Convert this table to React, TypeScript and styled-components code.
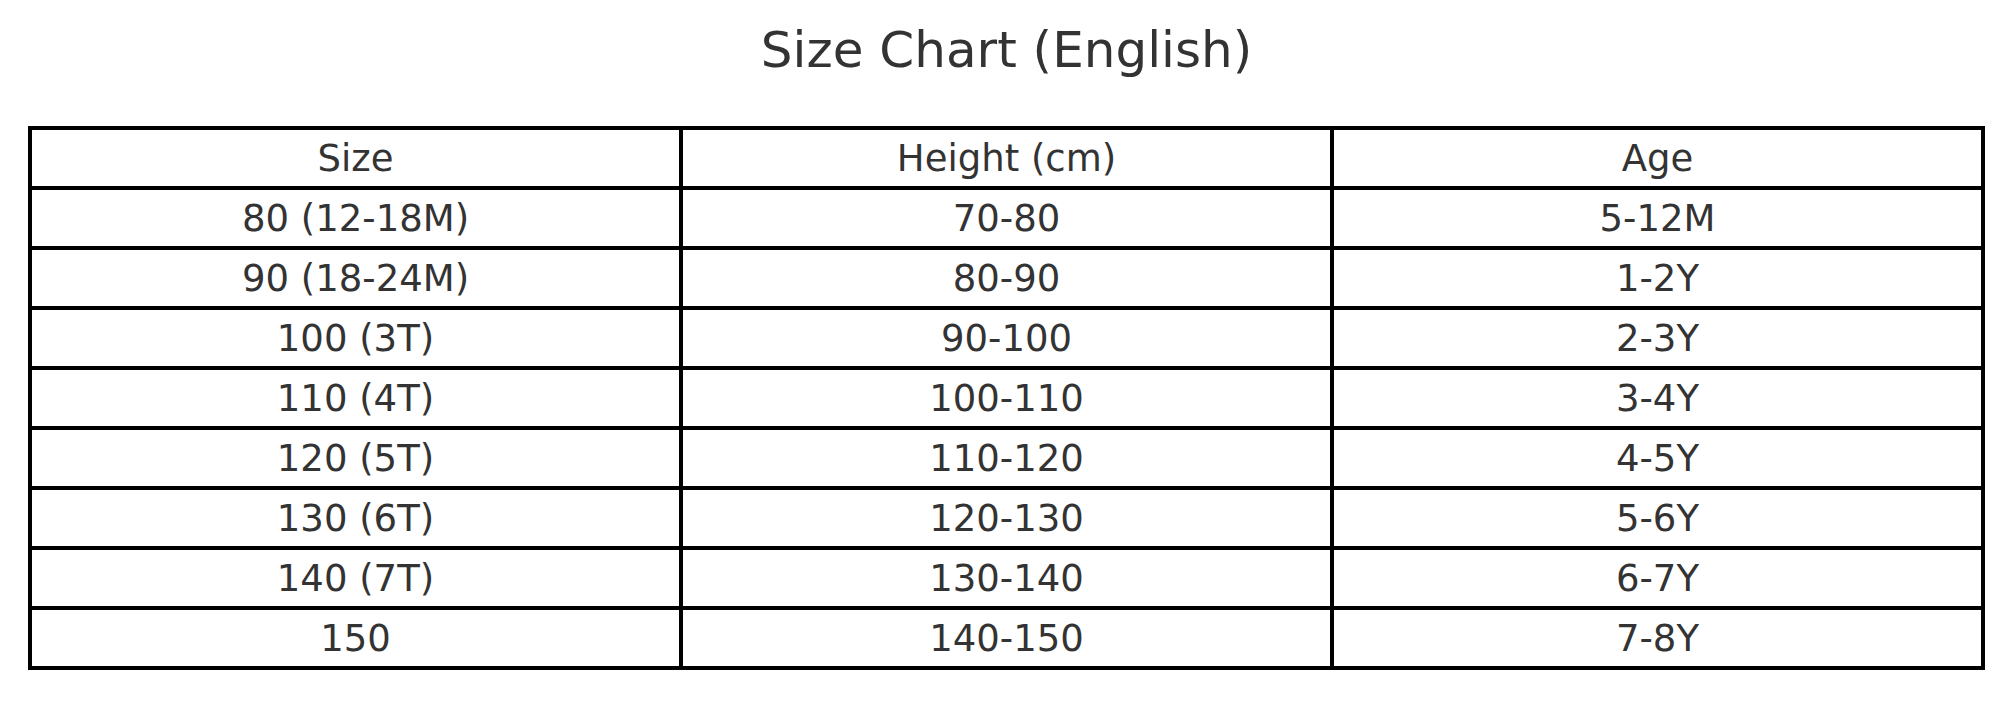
import React from "react";
import styled, { createGlobalStyle } from "styled-components";

const GlobalStyle = createGlobalStyle`
  html, body {
    margin: 0;
    padding: 0;
    background: #fff;
  }
  body {
    font-family: "DejaVu Sans", "Liberation Sans", sans-serif;
    color: #333;
  }
`;

type Row = { size: string; height: string; age: string };

const rows: Row[] = [
  { size: "80 (12-18M)", height: "70-80", age: "5-12M" },
  { size: "90 (18-24M)", height: "80-90", age: "1-2Y" },
  { size: "100 (3T)", height: "90-100", age: "2-3Y" },
  { size: "110 (4T)", height: "100-110", age: "3-4Y" },
  { size: "120 (5T)", height: "110-120", age: "4-5Y" },
  { size: "130 (6T)", height: "120-130", age: "5-6Y" },
  { size: "140 (7T)", height: "130-140", age: "6-7Y" },
  { size: "150", height: "140-150", age: "7-8Y" },
];

const Page = styled.div`
  width: 2013px;
  height: 717px;
  display: flex;
  flex-direction: column;
  align-items: flex-start;
  padding-left: 28px;
  box-sizing: border-box;
`;

const Title = styled.h1`
  width: 1957px;
  margin: 0;
  padding-top: 25px;
  font-size: 50px;
  line-height: 50px;
  font-weight: normal;
  text-align: center;
  color: #333;
`;

const Table = styled.table`
  margin-top: 51px;
  width: 1957px;
  table-layout: fixed;
  border-collapse: collapse;
`;

const Cell = styled.td`
  border: 4px solid #000;
  height: 56px;
  padding: 0;
  text-align: center;
  vertical-align: middle;
  font-size: 37px;
  color: #333;
  white-space: nowrap;
`;

const SizeChart = () => {
  return (
    <Table>
      <tbody>
        <tr>
          <Cell>Size</Cell>
          <Cell>Height (cm)</Cell>
          <Cell>Age</Cell>
        </tr>
        {rows.map((r, i) => (
          <tr key={i}>
            <Cell>{r.size}</Cell>
            <Cell>{r.height}</Cell>
            <Cell>{r.age}</Cell>
          </tr>
        ))}
      </tbody>
    </Table>
  );
};

const App = () => {
  return (
    <>
      <GlobalStyle />
      <Page>
        <Title>Size Chart (English)</Title>
        <SizeChart />
      </Page>
    </>
  );
};

export default App;
